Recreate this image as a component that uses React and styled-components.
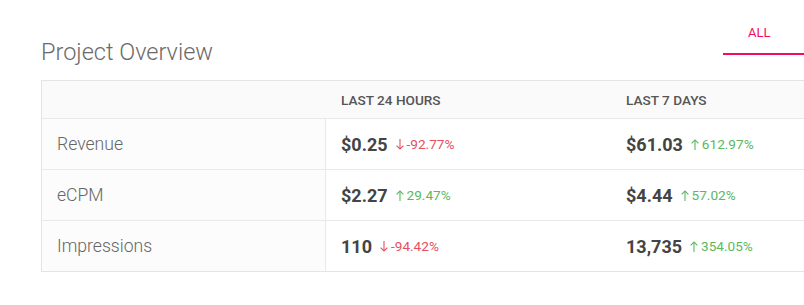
import React from "react";
import styled, { createGlobalStyle } from "styled-components";

const GlobalStyle = createGlobalStyle`
  html, body {
    margin: 0;
    padding: 0;
    background: #fff;
    overflow: hidden;
  }
  body {
    font-family: Roboto, "Liberation Sans", sans-serif;
  }
`;

const Page = styled.div`
  width: 883px;
  padding-left: 41px;
  box-sizing: border-box;
`;

const TopBar = styled.div`
  display: flex;
  justify-content: space-between;
  align-items: flex-start;
  height: 80px;
`;

const Title = styled.h2`
  margin: 38px 0 0;
  font-size: 23.5px;
  line-height: 28px;
  font-weight: 300;
  color: #6a6a6a;
`;

const Tabs = styled.div`
  display: flex;
`;

const Tab = styled.div`
  width: 160px;
  box-sizing: border-box;
  padding: 25px 0 13px 25px;
  font-size: 13px;
  line-height: 15px;
  color: ${(p) => (p.active ? "#f50a5f" : "#777")};
  border-bottom: 2px solid ${(p) => (p.active ? "#f50a5f" : "transparent")};
`;

const Table = styled.div`
  border: 1px solid #e4e4e4;
  border-right: none;
`;

const Row = styled.div`
  display: grid;
  grid-template-columns: 284px 285px 1fr;
  height: ${(p) => (p.head ? "37px" : "50px")};
  background: ${(p) => (p.head ? "#fafafa" : "#fff")};
  border-bottom: 1px solid #e9e9e9;

  &:last-child {
    border-bottom: none;
  }
`;

const HeadCell = styled.div`
  display: flex;
  align-items: center;
  padding: 0 15px;
  font-size: 13.6px;
  font-weight: 500;
  color: #555;
  text-transform: uppercase;
`;

const Label = styled.div`
  display: flex;
  align-items: center;
  padding: 0 15px;
  background: #fcfcfc;
  border-right: 1px solid #e9e9e9;
  font-size: 17.6px;
  font-weight: 300;
  color: #666;
`;

const Cell = styled.div`
  display: flex;
  align-items: center;
  padding: 0 15px;
`;

const Value = styled.span`
  font-size: 18px;
  font-weight: 700;
  color: #444;
  margin-right: 8px;
`;

const Change = styled.span`
  display: inline-flex;
  align-items: center;
  font-size: 13.6px;
  color: ${(p) => (p.up ? "#5cb860" : "#e5505f")};

  svg {
    margin: 0 3px 0 0;
  }
`;

const Arrow = ({ up }) => (
  <svg width="8" height="11" viewBox="0 0 8 11" fill="none" stroke="currentColor" strokeWidth="1.1">
    {up ? (
      <>
        <path d="M4 1v10" />
        <path d="M0.6 4.4L4 1l3.4 3.4" />
      </>
    ) : (
      <>
        <path d="M4 0v10" />
        <path d="M0.6 6.6L4 10l3.4-3.4" />
      </>
    )}
  </svg>
);

const rows = [
  { name: "Revenue", day: ["$0.25", false, "-92.77%"], week: ["$61.03", true, "612.97%"] },
  { name: "eCPM", day: ["$2.27", true, "29.47%"], week: ["$4.44", true, "57.02%"] },
  { name: "Impressions", day: ["110", false, "-94.42%"], week: ["13,735", true, "354.05%"] },
];

const Stat = ({ data }) => (
  <Cell>
    <Value>{data[0]}</Value>
    <Change up={data[1]}>
      <Arrow up={data[1]} />
      {data[2]}
    </Change>
  </Cell>
);

export default function App() {
  return (
    <Page>
      <GlobalStyle />
      <TopBar>
        <Title>Project Overview</Title>
        <Tabs>
          <Tab active>ALL</Tab>
        </Tabs>
      </TopBar>
      <Table>
        <Row head>
          <HeadCell />
          <HeadCell>Last 24 hours</HeadCell>
          <HeadCell>Last 7 days</HeadCell>
        </Row>
        {rows.map((r) => (
          <Row key={r.name}>
            <Label>{r.name}</Label>
            <Stat data={r.day} />
            <Stat data={r.week} />
          </Row>
        ))}
      </Table>
    </Page>
  );
}
